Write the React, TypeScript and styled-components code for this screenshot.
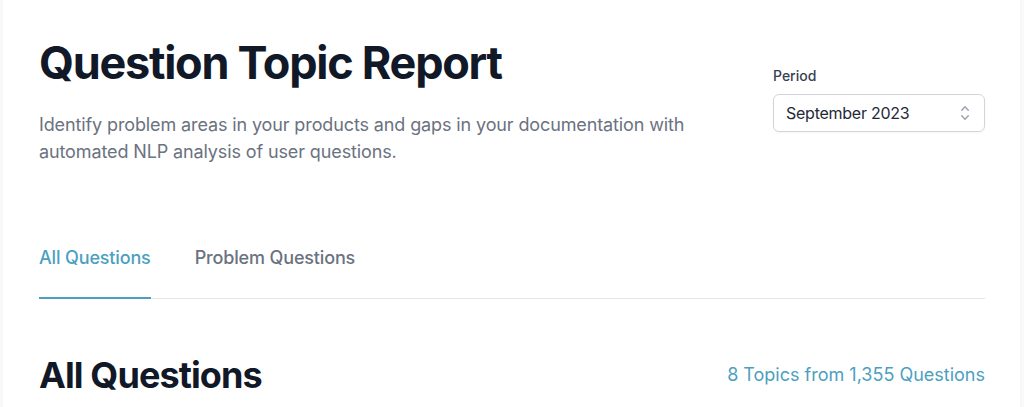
import styled, { createGlobalStyle } from 'styled-components';

const GlobalStyle = createGlobalStyle`
  * {
    box-sizing: border-box;
  }
  body {
    margin: 0;
    background: #f8f9fa;
    font-family: Inter, 'Noto Sans', sans-serif;
    -webkit-font-smoothing: antialiased;
  }
`;

const tabs = ['All Questions', 'Problem Questions'];

export default function App() {
  return (
    <>
      <GlobalStyle />
      <Page>
        <Card>
          <Header>
            <div>
              <Title>Question Topic Report</Title>
              <Subtitle>
                Identify problem areas in your products and gaps in your documentation with
                automated NLP analysis of user questions.
              </Subtitle>
            </div>
            <PeriodBox>
              <Label>Period</Label>
              <Select>
                <span>September 2023</span>
                <svg width="20" height="20" viewBox="0 0 20 20" fill="#9ca3af">
                  <path
                    fillRule="evenodd"
                    d="M10 3a.75.75 0 01.55.24l3.25 3.5a.75.75 0 11-1.1 1.02L10 4.852 7.3 7.76a.75.75 0 01-1.1-1.02l3.25-3.5A.75.75 0 0110 3zm-3.76 9.2a.75.75 0 011.06.04l2.7 2.908 2.7-2.908a.75.75 0 111.1 1.02l-3.25 3.5a.75.75 0 01-1.1 0l-3.25-3.5a.75.75 0 01.04-1.06z"
                  />
                </svg>
              </Select>
            </PeriodBox>
          </Header>

          <Tabs>
            {tabs.map((t, i) => (
              <Tab key={t} $active={i === 0}>
                {t}
              </Tab>
            ))}
          </Tabs>

          <SectionHead>
            <SectionTitle>All Questions</SectionTitle>
            <Count>8 Topics from 1,355 Questions</Count>
          </SectionHead>
        </Card>
      </Page>
    </>
  );
}

const Page = styled.div`
  height: 407px;
  padding: 0 4px 0 3px;
  overflow: hidden;
`;
const Card = styled.div`
  height: 100%;
  background: #ffffff;
  padding: 39px 35px 0 36px;
  box-shadow: 0 0 2px rgba(0, 0, 0, 0.04);
`;
const Header = styled.div`
  display: flex;
  justify-content: space-between;
  align-items: flex-start;
`;
const Title = styled.h1`
  margin: 0;
  font-size: 45px;
  line-height: 48px;
  font-weight: 700;
  letter-spacing: -0.028em;
  color: #111827;
`;
const Subtitle = styled.p`
  margin: 24px 0 0;
  max-width: 672px;
  font-size: 18px;
  line-height: 27px;
  letter-spacing: -0.12px;
  color: #6b7280;
`;
const PeriodBox = styled.div`
  margin-top: 27px;
  width: 212px;
`;
const Label = styled.div`
  font-size: 14px;
  line-height: 20px;
  font-weight: 500;
  color: #374151;
`;
const Select = styled.div`
  margin-top: 8px;
  height: 38px;
  display: flex;
  align-items: center;
  justify-content: space-between;
  padding: 0 9px 0 12px;
  border: 1px solid #d1d5db;
  border-radius: 6px;
  font-size: 16px;
  letter-spacing: -0.25px;
  color: #1f2937;
  box-shadow: 0 1px 2px rgba(0, 0, 0, 0.04);
`;
const Tabs = styled.div`
  margin-top: 79px;
  display: flex;
  gap: 44px;
  border-bottom: 1px solid #e5e7eb;
`;
const Tab = styled.div<{ $active: boolean }>`
  font-size: 18px;
  line-height: 28px;
  font-weight: 500;
  letter-spacing: -0.15px;
  padding-bottom: 25px;
  margin-bottom: -1px;
  border-bottom: 2px solid ${(p) => (p.$active ? '#4c9fc0' : 'transparent')};
  color: ${(p) => (p.$active ? '#4c9fc0' : '#6b7280')};
`;
const SectionHead = styled.div`
  margin-top: 56px;
  display: flex;
  justify-content: space-between;
  align-items: center;
`;
const SectionTitle = styled.h2`
  margin: 0;
  font-size: 36px;
  line-height: 40px;
  font-weight: 700;
  letter-spacing: -0.025em;
  color: #111827;
`;
const Count = styled.div`
  font-size: 18px;
  line-height: 28px;
  color: #4c9fc0;
`;
